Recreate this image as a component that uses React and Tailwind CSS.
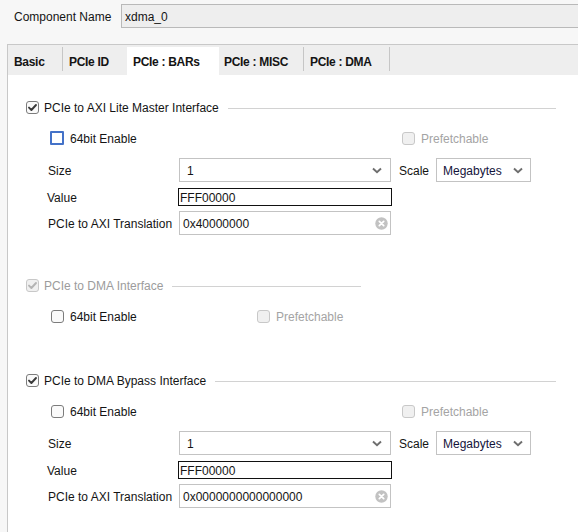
import React from 'react';

const Check = ({ color }) => (
  <svg width="11" height="11" viewBox="0 0 11 11" className="block">
    <path d="M2 5.6 L4.4 8 L9 3" fill="none" stroke={color} strokeWidth="1.9" strokeLinecap="round" strokeLinejoin="round" />
  </svg>
);

function Box({ checked, disabled, focus }) {
  if (focus) {
    return <div className="w-[14px] h-[14px] border-2 border-[#4472c8] bg-white rounded-[1px] shrink-0" />;
  }
  const cls = disabled ? 'border-[#c8c8c8] bg-[#f0f0f0]' : 'border-[#7c7c7c] bg-[#fafafa]';
  return (
    <div className={`w-[13px] h-[13px] rounded-[3px] border flex items-center justify-center shrink-0 ${cls}`}>
      {checked && <Check color={disabled ? '#b4b4b4' : '#3a3a3a'} />}
    </div>
  );
}

const Chevron = () => (
  <svg width="10" height="7" viewBox="0 0 10 7" className="block">
    <path d="M1 1.5 L5 5.3 L9 1.5" fill="none" stroke="#6e6e6e" strokeWidth="1.9" />
  </svg>
);

function Section({ label, width, disabled }) {
  return (
    <div className={`flex items-center h-[20px] ml-[18px] ${width}`}>
      <Box checked disabled={disabled} />
      <span className={`ml-[5px] pt-px whitespace-nowrap ${disabled ? 'text-[#9c9c9c]' : ''}`}>{label}</span>
      <div className="flex-1 h-px bg-[#d2d2d2] ml-[9px] mt-[3px]" />
    </div>
  );
}

function EnableRow({ focus, prefX, mt }) {
  return (
    <div className={`flex items-center h-[20px] ml-[43px] ${mt}`}>
      <div className={`flex items-center ${prefX}`}>
        {focus ? <div className="-ml-px"><Box focus /></div> : <Box />}
        <span className="ml-[6px] pt-px">64bit Enable</span>
      </div>
      <Box disabled />
      <span className="ml-[6px] pt-px text-[#a4a4a4]">Prefetchable</span>
    </div>
  );
}

function BarFields({ translation }) {
  return (
    <div>
      <div className="flex items-center h-[24px] ml-[40px] mt-[10px]">
        <div className="w-[131px] pt-px">Size</div>
        <div className="w-[212px] h-[24px] border border-[#c3c3c3] bg-white flex items-center pl-[7px] pr-[8px]">
          <span className="flex-1 pt-px">1</span>
          <Chevron />
        </div>
        <div className="w-[45px] pl-[8px] pt-px">Scale</div>
        <div className="w-[95px] h-[24px] border border-[#c3c3c3] bg-white flex items-center pl-[6px] pr-[7px]">
          <span className="flex-1 pt-px text-[#14143a]">Megabytes</span>
          <Chevron />
        </div>
      </div>
      <div className="flex items-center h-[18px] ml-[39px] mt-[6px]">
        <div className="w-[131px] pt-px">Value</div>
        <div className="w-[214px] h-[18px] border border-[#111] bg-white flex items-center pl-px pt-px">FFF00000</div>
      </div>
      <div className="flex items-center h-[24px] ml-[40px] mt-[5px]">
        <div className="w-[131px] pt-px">PCIe to AXI Translation</div>
        <div className="w-[212px] h-[24px] border border-[#c3c3c3] bg-white flex items-center pl-[3px] pr-[2px]">
          <span className="flex-1 pt-px">{translation}</span>
          <svg width="13" height="13" viewBox="0 0 13 13" className="block">
            <circle cx="6.5" cy="6.5" r="6.2" fill="#c2c2c2" />
            <path d="M4.3 4.3 L8.7 8.7 M8.7 4.3 L4.3 8.7" stroke="#fff" strokeWidth="1.7" strokeLinecap="round" />
          </svg>
        </div>
      </div>
    </div>
  );
}

const tabs = [
  { name: 'Basic', w: 'w-[54px]', pl: 'pl-[6px]' },
  { name: 'PCIe ID', w: 'w-[64px]', pl: 'pl-[6px]' },
  { name: 'PCIe : BARs', w: 'w-[92px]', pl: 'pl-[6px]', active: true },
  { name: 'PCIe : MISC', w: 'w-[84px]', pl: 'pl-[5px]' },
  { name: 'PCIe : DMA', w: 'w-[85px]', pl: 'pl-[6px]' },
];

export default function App() {
  return (
    <div className="w-[578px] h-[532px] overflow-hidden bg-[#f7f7f7] text-[12px] text-[#141414] font-['Liberation_Sans',Arial,sans-serif] leading-none">
      {/* component name */}
      <div className="flex items-center h-[24px] mt-[4px]">
        <div className="w-[121px] pl-[14px] pt-px">Component Name</div>
        <div className="flex-1 h-[24px] -mr-[6px] border border-[#b9b9b9] bg-[#eeeeee] flex items-center pl-[3px] pt-px">xdma_0</div>
      </div>

      <div className="ml-[7px] mt-[16px] h-[488px] border-l border-t border-[#c8c8c8] bg-white">
        {/* tabs */}
        <div className="flex h-[30px] pt-[2px] bg-[#eeeeee]">
          {tabs.map((t, i) => (
            <div key={t.name} className="flex">
              <div className={`${t.w} h-[28px] flex items-center ${t.pl} pt-px font-bold tracking-[-0.3px] ${t.active ? 'bg-white' : ''}`}>{t.name}</div>
              {!(t.active || (tabs[i + 1] && tabs[i + 1].active)) && <div className="w-px h-[24px] bg-[#c6c6c6]" />}
            </div>
          ))}
        </div>

        {/* AXI Lite master */}
        <div className="pt-[22px]">
          <Section label="PCIe to AXI Lite Master Interface" width="w-[530px]" />
        </div>
        <EnableRow focus prefX="w-[351px]" mt="mt-[11px]" />
        <BarFields translation="0x40000000" />

        {/* DMA */}
        <div className="mt-[40px]">
          <Section label="PCIe to DMA Interface" width="w-[335px]" disabled />
        </div>
        <EnableRow prefX="w-[206px]" mt="mt-[11px]" />

        {/* DMA bypass */}
        <div className="mt-[44px]">
          <Section label="PCIe to DMA Bypass Interface" width="w-[530px]" />
        </div>
        <EnableRow prefX="w-[351px]" mt="mt-[11px]" />
        <BarFields translation="0x0000000000000000" />
      </div>
    </div>
  );
}
